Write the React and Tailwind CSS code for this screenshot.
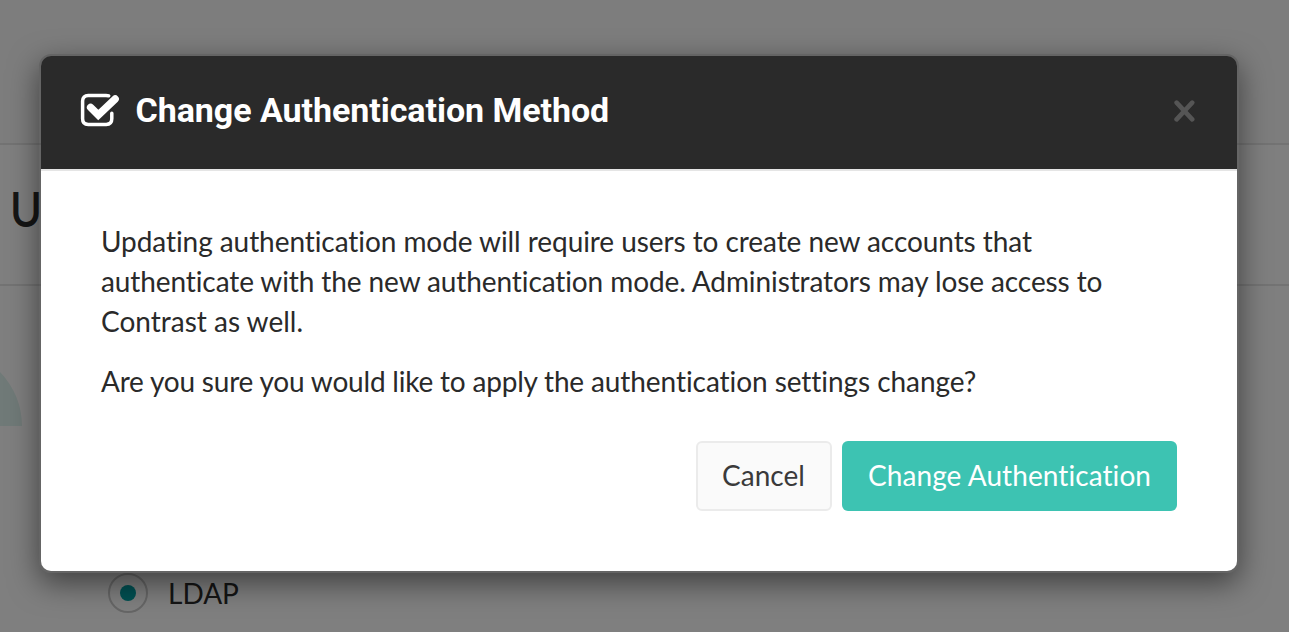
import React from "react";

function SettingsPage() {
  return (
    <div className="flex h-full w-full flex-col overflow-hidden bg-white">
      <div className="h-[145px] shrink-0 border-b-2 border-[#e6e6e6] bg-[#fafafa]" />
      <div className="flex h-[141px] shrink-0 items-center border-b-2 border-[#e6e6e6] bg-white pl-[9.5px]">
        <h1 className="origin-left scale-x-90 pb-[12px] font-['Lato',sans-serif] text-[48px] leading-[60px] font-semibold text-[#2a2a2a]">U</h1>
      </div>
      <div className="flex grow flex-col bg-white">
        <svg className="block h-[140px] w-[22px] shrink-0" viewBox="0 0 22 140">
          <path d="M-55 140 V63 A77 77 0 0 1 22 140 Z" fill="#e0f4f0" />
        </svg>
        <div className="mt-[147px] ml-[108px] flex h-10 items-center gap-5">
          <span className="flex h-10 w-10 items-center justify-center rounded-full border-2 border-[#cccccc]">
            <span className="h-4 w-4 rounded-full bg-[#00a1a4]" />
          </span>
          <span className="font-['Lato',sans-serif] text-[28px] leading-10 text-[#2a2a2a]">LDAP</span>
        </div>
      </div>
    </div>
  );
}

function CheckSquareIcon() {
  return (
    <svg className="mb-[2px] h-[34px] w-[40px] shrink-0" viewBox="0 0 40 34" fill="none" stroke="white">
      <path d="M28.7 2.8 C27.8 2.4 27 2.4 26 2.4 H8.2 C4.7 2.4 2.6 4.6 2.6 8 V25.8 C2.6 29.3 4.7 31.4 8.2 31.4 H26.2 C29.7 31.4 31.8 29.3 31.8 25.8 V20.2" strokeWidth="3.5" strokeLinecap="round" />
      <path d="M10.6 14.4 L18.3 22 L35.2 6" strokeWidth="7.4" strokeLinecap="round" strokeLinejoin="miter" />
    </svg>
  );
}

export default function App() {
  return (
    <div className="relative h-[632px] w-[1289px] overflow-hidden bg-white [font-variant-ligatures:none]">
      <SettingsPage />
      <div className="absolute inset-0 bg-black/50 pt-[54px] pl-[39px]">
        <div
          role="dialog"
          className="flex h-[519px] w-[1200px] flex-col rounded-[12px] border-2 border-black/20 shadow-[0_10px_30px_rgba(0,0,0,0.5)]"
        >
          <header className="flex h-[115px] shrink-0 items-center rounded-t-[10px] border-b-2 border-[#e5e5e5] bg-[#2a2a2a] pr-[42px] pb-[4px] pl-[39px]">
            <CheckSquareIcon />
            <h2 className="ml-[15.5px] grow pb-[2px] font-['Roboto',sans-serif] text-[34px] leading-[40px] font-bold tracking-[-0.05px] whitespace-nowrap text-white">
              Change Authentication Method
            </h2>
            <button aria-label="Close" className="flex">
              <svg className="h-[22px] w-[21px]" viewBox="0 0 21 22" fill="none" stroke="#555555">
                <path d="M2.6 2.6 L18.2 19.4 M18.2 2.6 L2.6 19.4" strokeWidth="4.6" strokeLinecap="round" />
              </svg>
            </button>
          </header>
          <div className="grow rounded-b-[10px] bg-white px-[60px] pt-[50px] font-['Lato',sans-serif] text-[28px] leading-10 whitespace-nowrap text-[#2a2a2a]">
            <div className="flex flex-col gap-5">
              <p>
                <span className="tracking-[-0.07px]">Updating authentication mode will require users to create new accounts that</span>
                <br />
                <span className="tracking-[-0.1px]">authenticate with the new authentication mode. Administrators may lose access to</span>
                <br />
                Contrast as well.
              </p>
              <p>
                <span className="tracking-[-0.2px]">Are you sure you would like to apply the </span>
                <span className="tracking-[-0.06px]">authentication settings change?</span>
              </p>
            </div>
            <footer className="mt-[40px] flex justify-end gap-[10px]">
              <button className="flex h-[70px] w-[136px] items-center justify-center rounded-[6px] border-2 border-[#ebebeb] bg-[#fafafa] pr-px pb-[2px] text-[#3a3a3a]">
                Cancel
              </button>
              <button className="flex h-[70px] w-[335px] items-center justify-center rounded-[6px] bg-[#3dc3b2] pb-[2px] tracking-[0.08px] text-white">
                Change Authentication
              </button>
            </footer>
          </div>
        </div>
      </div>
    </div>
  );
}
